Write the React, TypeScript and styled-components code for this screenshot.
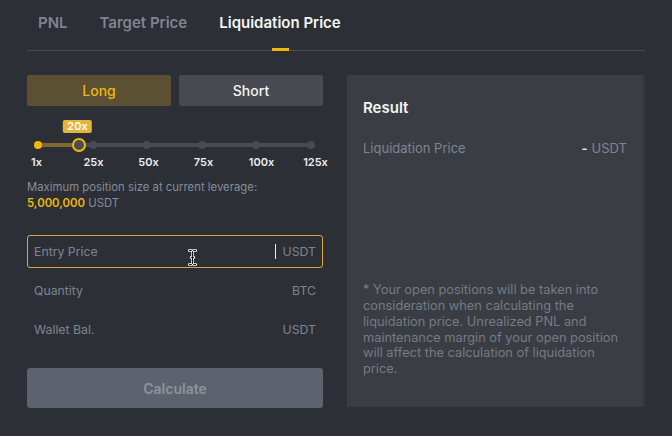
import React from "react";
import styled, { createGlobalStyle } from "styled-components";

const Global = createGlobalStyle`
  html, body { margin: 0; padding: 0; background: #2c2f35; }
  body { font-family: Inter, "Noto Sans", "Liberation Sans", sans-serif; color: #eaecef; }
  * { box-sizing: border-box; }
`;

const Page = styled.div`
  width: 672px;
  height: 436px;
  padding: 0 27px;
  background: #2c2f35;
  overflow: hidden;
`;

const Tabs = styled.div`
  display: flex;
  gap: 32px;
  padding-left: 11px;
  height: 51px;
  border-bottom: 1px solid #474b52;
`;

const Tab = styled.div<{ $active?: boolean }>`
  position: relative;
  font-size: 15px;
  font-weight: 600;
  line-height: 46px;
  color: ${(p) => (p.$active ? "#f3f4f6" : "#7f858f")};
  &::after {
    content: "";
    display: ${(p) => (p.$active ? "block" : "none")};
    position: absolute;
    left: 50%;
    bottom: -1px;
    width: 17px;
    height: 3px;
    margin-left: -8px;
    background: #f0b90b;
  }
`;

const Body = styled.div`
  display: grid;
  grid-template-columns: 296px 296px;
  gap: 24px;
  padding-top: 24px;
`;

const Left = styled.div`
  display: flex;
  flex-direction: column;
`;

const Toggle = styled.div`
  display: grid;
  grid-template-columns: 1fr 1fr;
  gap: 8px;
`;

const SideButton = styled.div<{ $active?: boolean }>`
  height: 31px;
  border-radius: 2px;
  display: flex;
  align-items: center;
  justify-content: center;
  font-size: 14px;
  font-weight: 500;
  background: ${(p) => (p.$active ? "#5b5034" : "#474a51")};
  color: ${(p) => (p.$active ? "#f0b90b" : "#f3f4f6")};
`;

const Slider = styled.div`
  position: relative;
  height: 73px;
`;

const Track = styled.div`
  position: absolute;
  left: 11px;
  width: 273px;
  top: 37px;
  height: 4px;
  border-radius: 2px;
  background: #474b54;
`;

const TrackFill = styled.div`
  position: absolute;
  left: 0;
  top: 0;
  height: 4px;
  background: #7c6a31;
`;

const Dot = styled.div<{ $on?: boolean }>`
  position: absolute;
  top: -2px;
  width: 8px;
  height: 8px;
  margin-left: -4px;
  border-radius: 50%;
  background: ${(p) => (p.$on ? "#f0b90b" : "#474b54")};
`;

const Thumb = styled.div`
  position: absolute;
  top: -5px;
  width: 14px;
  height: 14px;
  margin-left: -7px;
  border-radius: 50%;
  border: 2px solid #f0b90b;
  background: #474d57;
`;

const Bubble = styled.div`
  position: absolute;
  top: -20px;
  left: 3px;
  transform: translateX(-50%);
  padding: 0 4px;
  height: 13px;
  line-height: 13px;
  border-radius: 2px;
  background: #e4b53b;
  color: #fff;
  font-size: 11px;
  font-weight: 600;
`;

const TickLabel = styled.div`
  position: absolute;
  top: 49px;
  transform: translateX(-50%);
  font-size: 11px;
  font-weight: 600;
  color: #eaecef;
`;

const Info = styled.div`
  font-size: 11.35px;
  line-height: 16px;
  color: #848e9c;
`;

const Gold = styled.span`
  color: #f0b90b;
  font-weight: 600;
`;

const Fields = styled.div`
  display: flex;
  flex-direction: column;
  gap: 6px;
  margin-top: 24px;
`;

const Field = styled.div<{ $focus?: boolean }>`
  position: relative;
  height: 33px;
  display: flex;
  align-items: center;
  justify-content: space-between;
  padding: 0 6px;
  border-radius: 3px;
  border: 1px solid ${(p) => (p.$focus ? "#d7a93a" : "transparent")};
  font-size: 12.3px;
  color: #7f858f;
`;

const Unit = styled.span`
  display: flex;
  align-items: center;
  gap: 7px;
`;

const Caret = styled.span`
  width: 1px;
  height: 15px;
  background: #eaecef;
`;

const Cursor = styled.svg`
  position: absolute;
  left: 160px;
  top: 13px;
`;

const Calc = styled.div`
  margin-top: 22px;
  height: 40px;
  border-radius: 3px;
  background: #5d636e;
  display: flex;
  align-items: center;
  justify-content: center;
  font-size: 14px;
  font-weight: 600;
  color: #8d929a;
`;

const Panel = styled.div`
  height: 332px;
  background: #3a3d43;
  box-shadow: 2px 0 0 #33363c;
  display: flex;
  flex-direction: column;
  padding: 24px 16px 30px 16px;
`;

const PanelTitle = styled.div`
  font-size: 15px;
  font-weight: 600;
  color: #f3f4f6;
  line-height: 18px;
`;

const ResultRow = styled.div`
  margin-top: 23px;
  display: flex;
  justify-content: space-between;
  font-size: 13px;
  color: #7f858f;
`;

const Dash = styled.span`
  color: #eaecef;
  font-weight: 600;
  margin-right: 4px;
`;

const Note = styled.div`
  margin-top: auto;
  font-size: 12.8px;
  line-height: 15.8px;
  color: #767b84;
`;

const dots = [0, 20, 40, 60, 80, 100];
const labels = [
  { t: "1x", c: 9.5 },
  { t: "25x", c: 66.5 },
  { t: "50x", c: 121.5 },
  { t: "75x", c: 176.5 },
  { t: "100x", c: 234.5 },
  { t: "125x", c: 288.5 },
];
const value = 15.2;

export default function App() {
  return (
    <Page>
      <Global />
      <Tabs>
        <Tab>PNL</Tab>
        <Tab>Target Price</Tab>
        <Tab $active>Liquidation Price</Tab>
      </Tabs>
      <Body>
        <Left>
          <Toggle>
            <SideButton $active>Long</SideButton>
            <SideButton>Short</SideButton>
          </Toggle>
          <Slider>
            <Track>
              <TrackFill style={{ width: `${value}%` }} />
              {dots.map((d) => (
                <Dot key={d} $on={d <= value} style={{ left: `${d}%` }} />
              ))}
              <Thumb style={{ left: `${value}%` }}>
                <Bubble>20x</Bubble>
              </Thumb>
            </Track>
            {labels.map((l) => (
              <TickLabel key={l.t} style={{ left: l.c }}>
                {l.t}
              </TickLabel>
            ))}
          </Slider>
          <Info>
            Maximum position size at current leverage:
            <br />
            <Gold>5,000,000</Gold> USDT
          </Info>
          <Fields>
            <Field $focus>
              <span>Entry Price</span>
              <Unit>
                <Caret />
                USDT
              </Unit>
              <Cursor width="9" height="17" viewBox="0 0 9 17">
                <path
                  d="M1 1.5h2.5l1 1 1-1H8M4.5 2.5v12M1 15.5h2.5l1-1 1 1H8M3 8.5h3"
                  fill="none"
                  stroke="#fff"
                  strokeWidth="2.4"
                  strokeLinecap="round"
                />
                <path
                  d="M1 1.5h2.5l1 1 1-1H8M4.5 2.5v12M1 15.5h2.5l1-1 1 1H8M3 8.5h3"
                  fill="none"
                  stroke="#111"
                  strokeWidth="1"
                />
              </Cursor>
            </Field>
            <Field>
              <span>Quantity</span>
              <span>BTC</span>
            </Field>
            <Field>
              <span>Wallet Bal.</span>
              <span>USDT</span>
            </Field>
          </Fields>
          <Calc>Calculate</Calc>
        </Left>
        <Panel>
          <PanelTitle>Result</PanelTitle>
          <ResultRow>
            <span>Liquidation Price</span>
            <span>
              <Dash>-</Dash>USDT
            </span>
          </ResultRow>
          <Note>
            * Your open positions will be taken into consideration when
            calculating the liquidation price. Unrealized PNL and maintenance
            margin of your open position will affect the calculation of
            liquidation price.
          </Note>
        </Panel>
      </Body>
    </Page>
  );
}
